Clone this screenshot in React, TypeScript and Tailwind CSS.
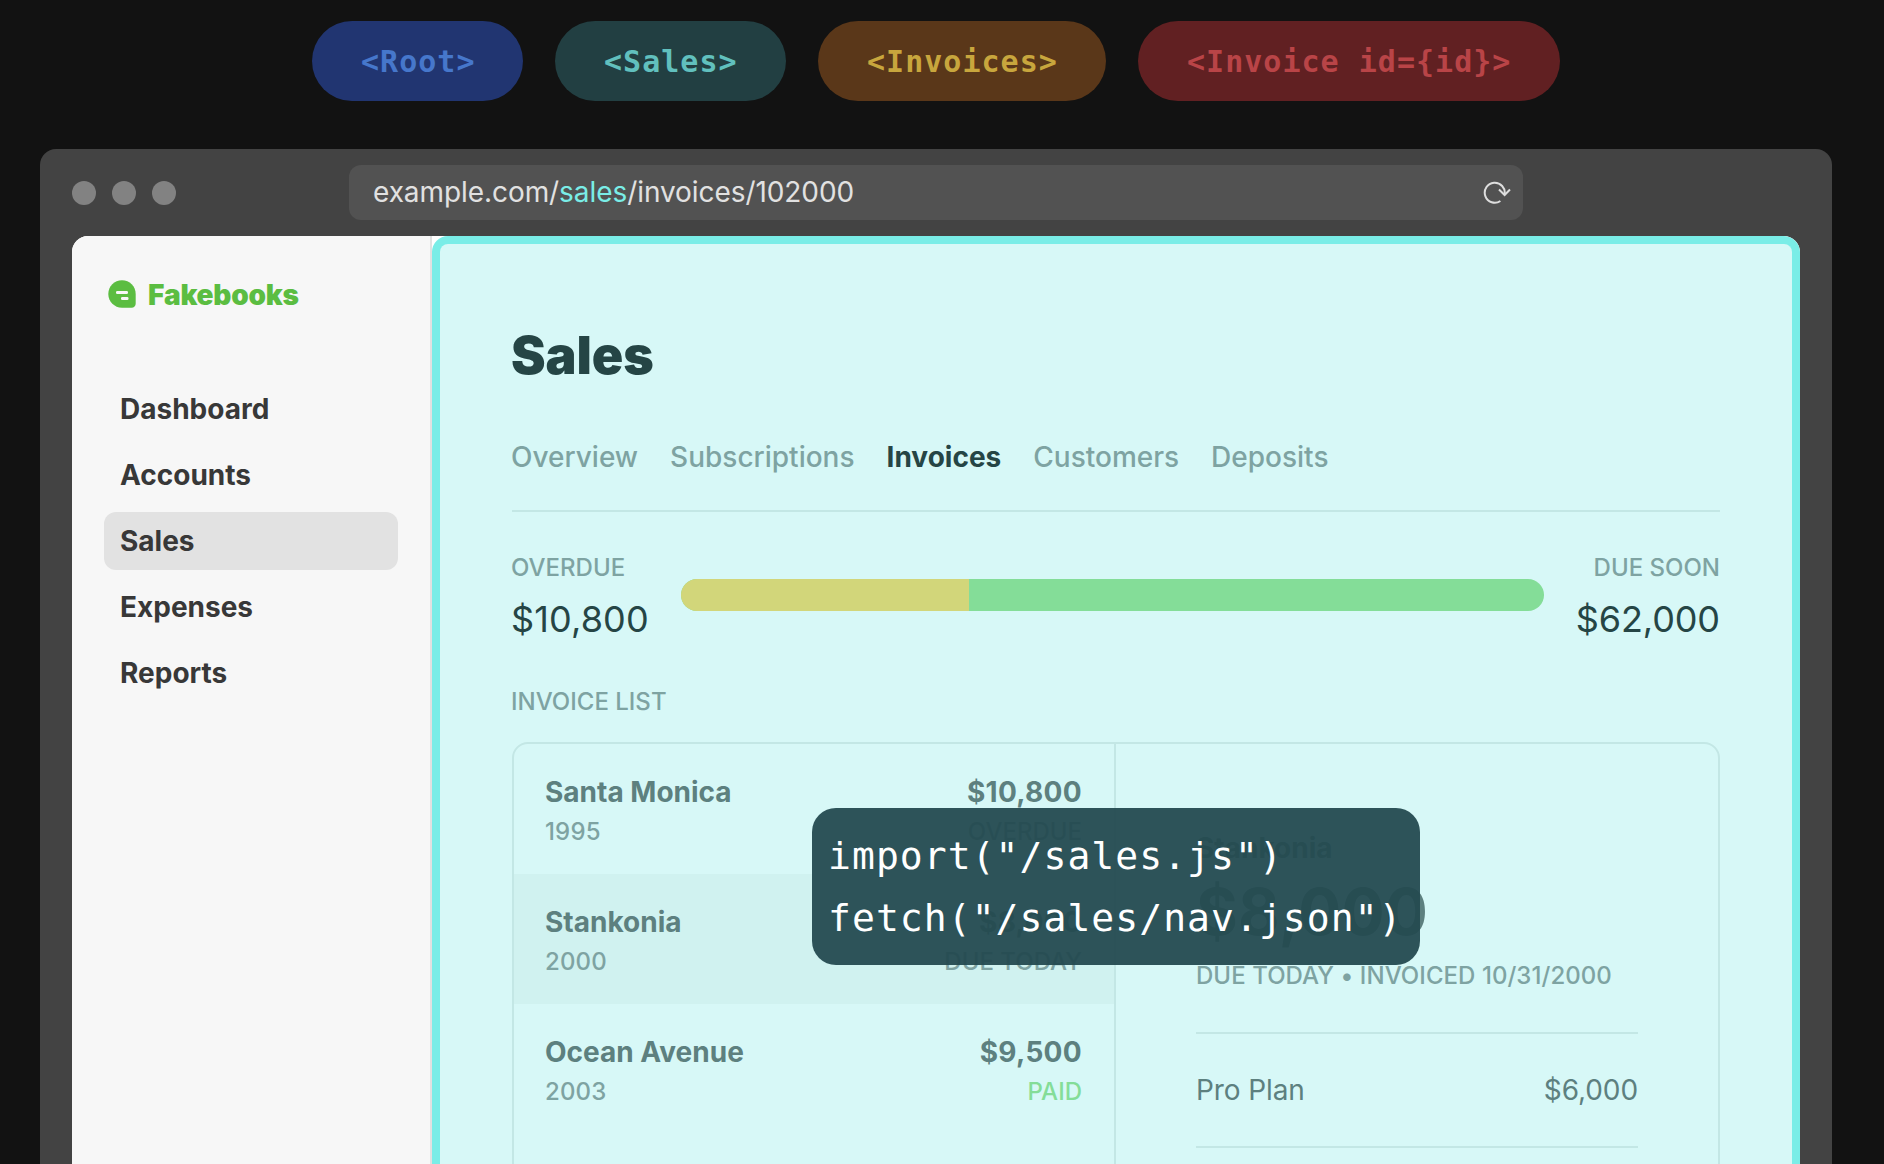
import React from "react";

const pills = [
  { label: "<Root>", cls: "w-[211px] bg-[#213571] text-[#4677cb]" },
  { label: "<Sales>", cls: "w-[231px] bg-[#223f42] text-[#61c0be]" },
  { label: "<Invoices>", cls: "w-[288px] bg-[#5a3719] text-[#c8a63d]" },
  { label: "<Invoice id={id}>", cls: "w-[422px] bg-[#612022] text-[#b94447]" },
];

const nav = ["Dashboard", "Accounts", "Sales", "Expenses", "Reports"];
const tabs = ["Overview", "Subscriptions", "Invoices", "Customers", "Deposits"];

const invoices = [
  { name: "Santa Monica", year: "1995", amount: "$10,800", status: "OVERDUE" },
  { name: "Stankonia", year: "2000", amount: "$8,000", status: "DUE TODAY" },
  { name: "Ocean Avenue", year: "2003", amount: "$9,500", status: "PAID" },
];

function LogoIcon() {
  return (
    <svg width="28" height="28" viewBox="0 0 28 28" className="block">
      <path
        d="M14 0.3C6.4 0.3 0.3 6.4 0.3 14S6.4 27.7 14 27.7h9.5c2.5 0 4.2-1.7 4.2-4.2V14C27.7 6.4 21.600 0.300 14 0.300z"
        fill="#5bbd41"
      />
      <rect x="8" y="11" width="12" height="3" rx="1.2" fill="#f7f7f7" />
      <rect x="13" y="17" width="7.500" height="3" rx="1.2" fill="#f7f7f7" />
    </svg>
  );
}

function ReloadIcon() {
  return (
    <svg width="28" height="24" viewBox="0 0 28 24" fill="none" stroke="#dedede" strokeWidth="2" className="block">
      <path d="M17.400 20A10 10 0 1 1 21.600 13.500" />
      <path d="M16 8.500L21.600 14L27 8.500" />
    </svg>
  );
}

function Sidebar() {
  return (
    <aside className="w-[360px] shrink-0 border-r-2 border-[#e1e1e1] bg-[#f7f7f7] px-8">
      <div className="flex h-[116px] items-center gap-3 pl-1">
        <LogoIcon />
        <span className="pt-px text-[28px] font-black tracking-[-0.2px] text-[#5bbd41]">Fakebooks</span>
      </div>
      <nav className="mt-7 flex w-[294px] flex-col gap-2">
        {nav.map((n) => (
          <a
            key={n}
            className={
              "flex h-[58px] items-center rounded-xl px-4 text-[28px] font-bold text-[#383838] " +
              (n === "Sales" ? "bg-[#e2e2e2]" : "")
            }
          >
            {n}
          </a>
        ))}
      </nav>
    </aside>
  );
}

function InvoiceRow({ inv }: { inv: (typeof invoices)[number] }) {
  return (
    <div
      className={
        "flex h-[130px] justify-between px-8 pt-[27px] " + (inv.name === "Stankonia" ? "bg-[#d0f2f0]" : "")
      }
    >
      <div className="-ml-px">
        <div className="text-[28px] font-bold leading-[42px] text-[#5d807f]">{inv.name}</div>
        <div className="text-2xl font-medium leading-[38px] tracking-[0.15px] text-[#7ea3a2]">{inv.year}</div>
      </div>
      <div className="text-right">
        <div className="text-[28px] font-bold leading-[42px] tracking-[0.3px] text-[#5d807f]">{inv.amount}</div>
        <div
          className={
            "text-2xl font-medium leading-[38px] " + (inv.status === "PAID" ? "text-[#84dd98]" : "text-[#7ea3a2]")
          }
        >
          {inv.status}
        </div>
      </div>
    </div>
  );
}

function InvoiceDetail() {
  return (
    <div className="flex-1 px-20 pt-[83px]">
      <div className="text-[28px] font-bold leading-[42px] text-[#5d807f]">Stankonia</div>
      <div className="pt-[11px] text-[64px] font-bold leading-[64px] tracking-[0.15px] text-[#5d807f]">$8,000</div>
      <div className="mt-[13px] text-2xl font-medium leading-[38px] tracking-[0.05px] whitespace-nowrap text-[#7ea3a2]">
        DUE TODAY • INVOICED 10/31/2000
      </div>
      <div className="mt-[37px] border-y-2 border-[#c3e7e5]">
        <div className="flex h-28 items-center justify-between text-[28px] text-[#5d807f]">
          <span className="tracking-[-0.1px]">Pro Plan</span>
          <span className="tracking-[-0.1px]">$6,000</span>
        </div>
      </div>
    </div>
  );
}

function SalesPanel() {
  return (
    <main className="relative flex-1 rounded-t-2xl border-8 border-b-0 border-[#7aede7] bg-[#d7f8f7] px-[72px] pt-20">
      <h1 className="-ml-px text-[52px] font-black leading-[64px] tracking-[-0.1px] text-[#254545]">Sales</h1>
      <div className="mt-12 flex h-[76px] border-b-2 border-[#c3e7e5] text-[28px] font-medium leading-[42px] text-[#7ea3a2]">
        <div className="-ml-px flex gap-8">
          {tabs.map((t) => (
            <span key={t} className={t === "Invoices" ? "font-bold text-[#254545]" : ""}>
              {t}
            </span>
          ))}
        </div>
      </div>
      <div className="mt-[37px] flex">
        <div className="-ml-px w-[170px]">
          <div className="text-2xl font-medium leading-[38px] text-[#7ea3a2]">OVERDUE</div>
          <div className="mt-0.5 text-4xl leading-[60px] tracking-[0.15px] text-[#254545]">$10,800</div>
        </div>
        <div className="mt-[30px] flex h-8 w-[863px] overflow-hidden rounded-full bg-[#84dd98]">
          <div className="w-1/3 bg-[#d2d67a]" />
        </div>
        <div className="flex-1 text-right">
          <div className="text-2xl font-medium leading-[38px] text-[#7ea3a2]">DUE SOON</div>
          <div className="mt-0.5 text-4xl leading-[60px] tracking-[-0.1px] text-[#254545]">$62,000</div>
        </div>
      </div>
      <div className="mt-[34px] -ml-px text-2xl font-medium leading-[38px] text-[#7ea3a2]">INVOICE LIST</div>
      <div className="mt-[21px] flex h-[500px] rounded-2xl border-2 border-[#c3e7e5]">
        <div className="w-[602px] border-r-2 border-[#c3e7e5]">
          {invoices.map((inv) => (
            <InvoiceRow key={inv.name} inv={inv} />
          ))}
        </div>
        <InvoiceDetail />
      </div>
      <pre className="absolute top-[564px] left-[372px] h-[157px] w-[608px] rounded-3xl bg-[#244a50]/95 pt-[17px] pl-4 font-['DejaVu_Sans_Mono',monospace] text-[38px] leading-[62px] tracking-[1.06px] text-white">
        {'import("/sales.js")\nfetch("/sales/nav.json")'}
      </pre>
    </main>
  );
}

export default function App() {
  return (
    <div className="flex h-[1164px] w-[1884px] flex-col overflow-hidden bg-[#121212] font-['Inter',sans-serif]">
      <div className="ml-[312px] flex gap-8 pt-[21px]">
        {pills.map((p) => (
          <div
            key={p.label}
            className={
              "flex h-20 items-center rounded-full pl-[49px] font-['DejaVu_Sans_Mono',monospace] text-[30px] font-bold tracking-[1.02px] whitespace-pre " +
              p.cls
            }
          >
            {p.label}
          </div>
        ))}
      </div>
      <div className="mt-12 ml-10 flex w-[1792px] flex-1 flex-col rounded-t-2xl bg-[#434343] px-8">
        <div className="flex h-[87px] shrink-0 items-center">
          <div className="flex w-[277px] gap-4">
            <div className="size-6 rounded-full bg-[#828282]" />
            <div className="size-6 rounded-full bg-[#828282]" />
            <div className="size-6 rounded-full bg-[#828282]" />
          </div>
          <div className="flex h-[55px] w-[1174px] items-center justify-between rounded-xl bg-[#525252] pr-3 pl-6 text-[28px] tracking-[-0.07px] text-[#e1e1e1]">
            <span className="pb-0.5">
              example.com/<span className="text-[#7aede7]">sales</span>/invoices/102000
            </span>
            <ReloadIcon />
          </div>
        </div>
        <div className="flex h-[928px] shrink-0 items-stretch overflow-hidden rounded-t-2xl bg-white">
          <Sidebar />
          <SalesPanel />
        </div>
      </div>
    </div>
  );
}
